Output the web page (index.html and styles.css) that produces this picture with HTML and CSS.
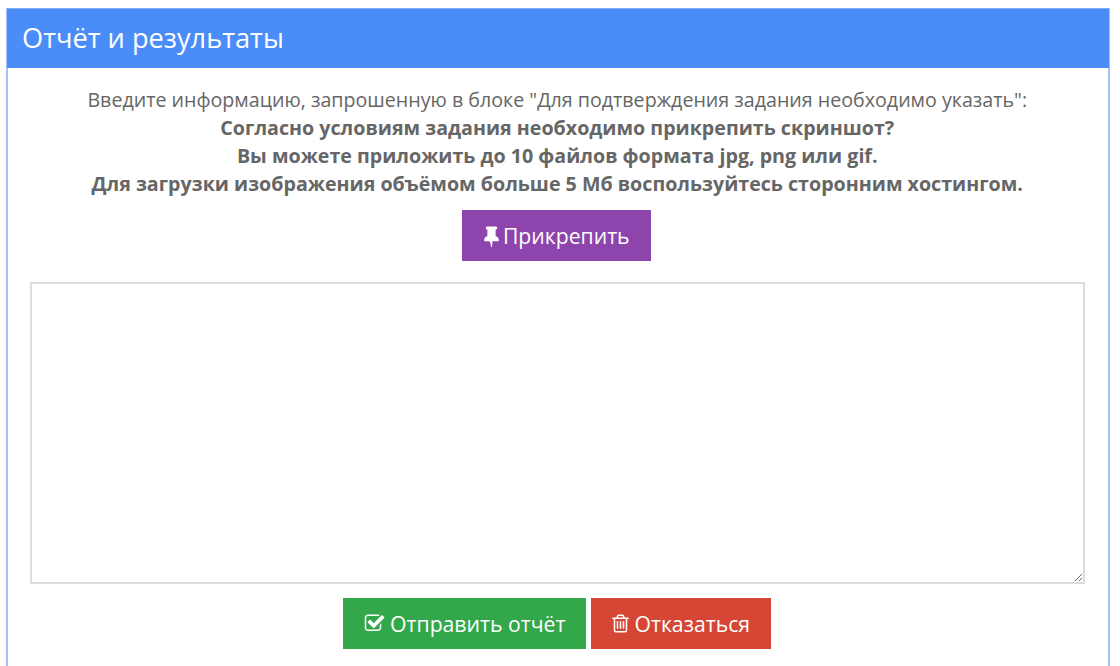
FILE: index.html
```html
<!DOCTYPE html>
<html lang="ru">
<head>
<meta charset="utf-8">
<title>Отчёт и результаты</title>
<link rel="stylesheet" href="styles.css">
</head>
<body>
<section class="panel">
  <h2 class="panel-head">Отчёт и результаты</h2>
  <div class="panel-body">
    <div class="intro">
      <p>Введите информацию, запрошенную в блоке "Для подтверждения задания необходимо указать":</p>
      <p class="strong">Согласно условиям задания необходимо прикрепить скриншот?</p>
      <p class="strong">Вы можете приложить до 10 файлов формата jpg, png или gif.</p>
      <p class="strong">Для загрузки изображения объёмом больше 5 Мб воспользуйтесь сторонним хостингом.</p>
    </div>
    <button class="btn btn-purple" type="button">
      <svg class="icon icon-pin" viewBox="0 -250 1152 1792" aria-hidden="true"><path d="M480 672v448q0 14-9 23t-23 9-23-9-9-23v-448q0-14 9-23t23-9 23 9 9 23zm672 352q0 26-19 45t-45 19h-429l-51 483q-2 12-10.5 20.5t-20.5 8.5h-1q-27 0-32-27l-76-485h-404q-26 0-45-19t-19-45q0-123 78.5-221.5t177.5-98.5v-512q-52 0-90-38t-38-90 38-90 90-38h640q52 0 90 38t38 90-38 90-90 38v512q99 0 177.5 98.5t78.5 221.5z"/></svg>
      Прикрепить
    </button>
    <textarea class="report"></textarea>
    <div class="actions">
      <button class="btn btn-green" type="button">
        <svg class="icon" viewBox="0 0 1792 1792" aria-hidden="true"><path d="M1472 930v318q0 119-84.5 203.5t-203.5 84.5h-832q-119 0-203.5-84.5t-84.5-203.5v-832q0-119 84.5-203.5t203.5-84.5h832q63 0 117 25 15 7 18 23 3 17-9 29l-49 49q-10 10-23 10-3 0-9-2-23-6-45-6h-832q-66 0-113 47t-47 113v832q0 66 47 113t113 47h832q66 0 113-47t47-113v-254q0-13 9-22l64-64q10-10 23-10 6 0 12 3 20 8 20 29zm231-489l-814 814q-24 24-57 24t-57-24l-430-430q-24-24-24-57t24-57l110-110q24-24 57-24t57 24l263 263 647-647q24-24 57-24t57 24l110 110q24 24 24 57t-24 57z"/></svg>
        Отправить отчёт
      </button>
      <button class="btn btn-red" type="button">
        <svg class="icon" viewBox="0 0 1792 1792" aria-hidden="true"><path d="M704 736v576q0 14-9 23t-23 9h-64q-14 0-23-9t-9-23v-576q0-14 9-23t23-9h64q14 0 23 9t9 23zm256 0v576q0 14-9 23t-23 9h-64q-14 0-23-9t-9-23v-576q0-14 9-23t23-9h64q14 0 23 9t9 23zm256 0v576q0 14-9 23t-23 9h-64q-14 0-23-9t-9-23v-576q0-14 9-23t23-9h64q14 0 23 9t9 23zm128 724v-948h-896v948q0 22 7 40.5t14.5 27 10.5 8.5h832q3 0 10.5-8.5t14.5-27 7-40.5zm-672-1076h448l-48-117q-7-9-17-11h-317q-10 2-17 11zm928 32v64q0 14-9 23t-23 9h-96v948q0 83-47 143.5t-113 60.5h-832q-66 0-113-58.5t-47-141.5v-952h-96q-14 0-23-9t-9-23v-64q0-14 9-23t23-9h309l70-167q15-37 54-63t79-26h320q40 0 79 26t54 63l70 167h309q14 0 23 9t9 23z"/></svg>
        Отказаться
      </button>
    </div>
  </div>
</section>
</body>
</html>
```
FILE: styles.css
```css
* { box-sizing: border-box; }
html, body { height: 100%; }
body {
  margin: 0;
  padding: 8px 10.5px 0 6px;
  background: #fff;
  overflow: hidden;
  font-family: "Open Sans", sans-serif;
  color: #666;
}
.panel {
  height: 658px;
  border-left: 2px solid #a3c2fa;
  border-right: 2px solid #a3c2fa;
}
.panel-head {
  margin: 0 -1px;
  height: 60px;
  padding: 0 15px;
  background: #4b8df8;
  border-top: 1px solid #7fadf9;
  color: #fff;
  font-weight: 400;
  line-height: 57px;
  font-size: 27.2px;
}
.panel-body {
  display: flex;
  flex-direction: column;
  align-items: center;
  padding: 17.5px 23px 0 22px;
}
.intro {
  width: 100%;
  text-align: center;
  font-size: 19.65px;
  line-height: 28.2px;
  white-space: nowrap;
}
.intro p { margin: 0; }
.strong { font-weight: 700; }
.btn {
  display: flex;
  align-items: center;
  justify-content: center;
  gap: 4px;
  height: 51px;
  border: 0;
  border-radius: 0;
  padding: 0;
  color: #fff;
  font-family: inherit;
  font-size: 21.2px;
}
.icon { width: 21px; height: 21px; fill: currentColor; }
.icon-pin { width: 15px; height: 23px; }
.btn-purple { width: 189px; margin: 11.4px 1px 0 0; background: #8e44ad; }
.btn-green { width: 243px; gap: 5px; background: #32a84a; }
.btn-red { width: 180px; gap: 3px; padding-right: 2px; background: #d64635; }
.report {
  display: block;
  width: 100%;
  height: 302px;
  margin-top: 21px;
  border: 2px solid #dcdcdc;
  background: #fff;
}
.actions {
  display: flex;
  gap: 5px;
  margin-top: 14px;
}
```
